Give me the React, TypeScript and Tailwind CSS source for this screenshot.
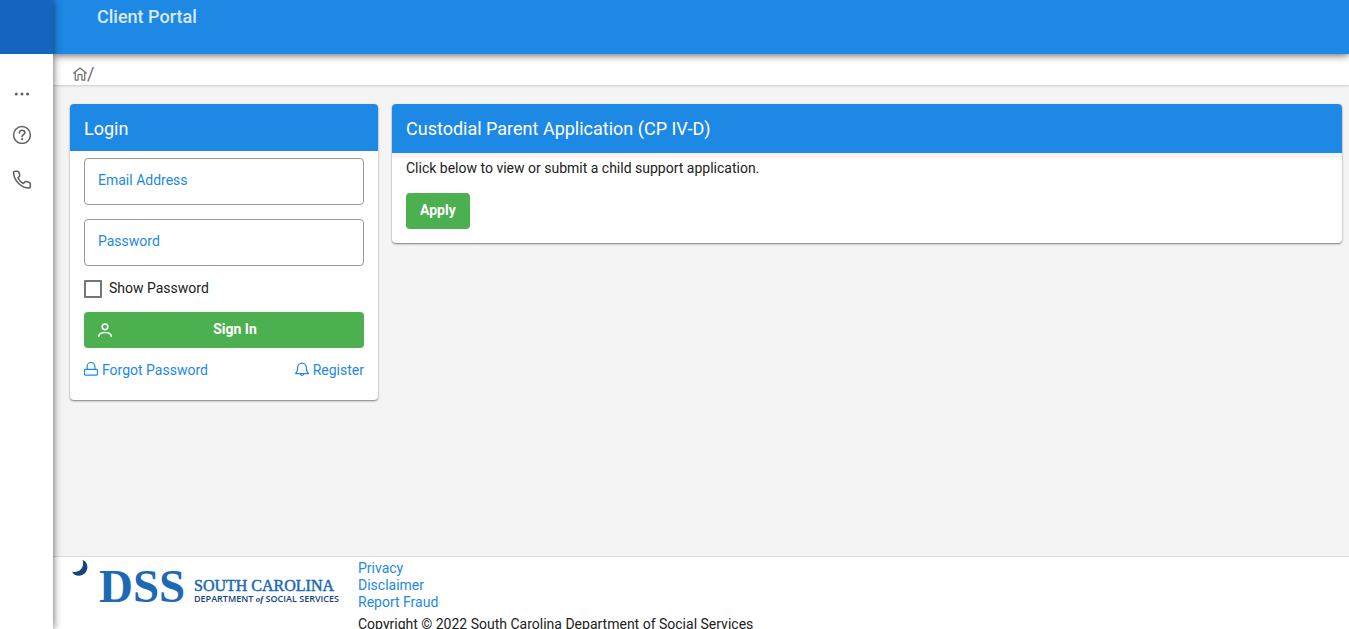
import { useState } from "react";
import type { ReactNode } from "react";

const Icon = ({
  className,
  children,
}: {
  className: string;
  children: ReactNode;
}) => (
  <svg
    className={className}
    fill="none"
    stroke="currentColor"
    strokeLinecap="round"
    strokeLinejoin="round"
    viewBox="0 0 20 20"
    aria-hidden="true"
  >
    {children}
  </svg>
);

const Sidebar = () => (
  <aside className="relative z-20 flex w-[53px] shrink-0 flex-col bg-white shadow-[0_0_8px_rgba(0,0,0,0.65)]">
    <div className="h-[54px] bg-[#1565c0]" />
    <nav className="flex flex-col pl-3 pt-[30px] text-[#616161]">
      <button type="button" aria-label="More" className="h-5 w-5">
        <Icon className="h-5 w-5">
          <g fill="currentColor" stroke="none">
            <circle cx="4.3" cy="10" r="1.5" />
            <circle cx="10" cy="10" r="1.5" />
            <circle cx="15.6" cy="10" r="1.5" />
          </g>
        </Icon>
      </button>
      <a href="#help" aria-label="Help" className="mt-5 h-5 w-5">
        <Icon className="h-5 w-5">
          <circle cx="10" cy="11" r="8.400" strokeWidth="1.500" />
          <path
            strokeWidth="1.6"
            d="M7.3 9c0-1.600 1.200-2.700 2.800-2.700s2.700 1 2.700 2.400c0 2-2.700 2-2.700 3.900"
          />
          <circle cx="10.1" cy="15.2" r="1.100" fill="currentColor" stroke="none" />
        </Icon>
      </a>
      <a href="#contact" aria-label="Contact" className="mt-[25px] h-5 w-5">
        <Icon className="h-5 w-5">
          <path
            strokeWidth="1.6"
            d="M2.500 2.300 5.500 2.200c.7 0 1.200.4 1.400 1l.8 2.800c.2.600 0 1.100-.4 1.500L5.900 9c1.200 2.400 3.100 4.300 5.500 5.500l1.400-1.500c.4-.4 1-.6 1.500-.4l2.900.8c.7.2 1.100.7 1.100 1.400v3.200c0 .6-.4 1-1 1C9.100 19 1.600 11.500 1.600 3.200c0-.6.3-.9.9-.9Z"
          />
        </Icon>
      </a>
    </nav>
  </aside>
);

const DssLogo = () => (
  <svg
    className="h-16 w-[280px] shrink-0"
    viewBox="0 0 280 64"
    role="img"
    aria-label="South Carolina Department of Social Services"
  >
    <path
      fill="#164280"
      d="M10.500 0c3 1 5 3.900 4.900 7.200-.1 4.800-3.900 8.500-8.400 8.500-3.200 0-6-1.700-7-4.300 1.500.7 3.900.8 6.300-.3C9.900 9.500 12.300 5.200 10.500 0Z"
    />
    <g fill="#1c69b5" fontFamily="'Liberation Serif', serif">
      <text x="27" y="42" fontSize="47" fontWeight="700">
        DSS
      </text>
      <text x="122" y="31" fontSize="16" stroke="#1c69b5" strokeWidth="0.5">
        SOUTH CAROLINA
      </text>
    </g>
    <text
      x="122"
      y="42"
      fill="#164280"
      fontSize="9"
      fontWeight="600"
      fontFamily="'Open Sans', sans-serif"
    >
      DEPARTMENT{" "}
      <tspan fontFamily="'Liberation Serif', serif" fontStyle="italic">
        of
      </tspan>{" "}
      SOCIAL SERVICES
    </text>
  </svg>
);

const LoginCard = () => {
  const [showPassword, setShowPassword] = useState(false);
  const fieldClass =
    "block h-[47px] w-full rounded border border-[#999] bg-white px-[13px] pb-1 text-sm text-[#212121] placeholder:text-[#1e88e5] focus:outline-none focus:border-[#1e88e5]";

  return (
    <section className="w-[308px] shrink-0 overflow-hidden rounded bg-white shadow-[0_1px_2px_rgba(0,0,0,0.5)]">
      <h2 className="bg-[#1e88e5] px-3.5 pb-2 pt-[11px] text-lg font-normal leading-7 text-white">
        Login
      </h2>
      <form
        className="px-3.5 pb-5 pt-[7px]"
        onSubmit={(e) => e.preventDefault()}
      >
        <input
          type="email"
          aria-label="Email Address"
          placeholder="Email Address"
          className={fieldClass}
        />
        <input
          type={showPassword ? "text" : "password"}
          aria-label="Password"
          placeholder="Password"
          className={`mt-3.5 ${fieldClass}`}
        />
        <label className="mt-3 flex items-start gap-[7px] text-sm text-[#212121]">
          <input
            type="checkbox"
            checked={showPassword}
            onChange={(e) => setShowPassword(e.target.checked)}
            className="mt-0.5 h-[18px] w-[18px] appearance-none rounded-[1px] border-2 border-[#757575] bg-white checked:border-[#1e88e5] checked:bg-[#1e88e5]"
          />
          Show Password
        </label>
        <button
          type="submit"
          className="mt-3.5 flex h-9 w-full items-center rounded bg-[#4caf50] px-3.5 text-sm font-bold text-white"
        >
          <Icon className="h-3.5 w-3.5">
            <circle cx="10" cy="5.500" r="4" strokeWidth="2.200" />
            <path strokeWidth="2.200" d="M1 19c.5-3.500 4-5.500 9-5.500s8.500 2 9 5.500" />
          </Icon>
          <span className="flex-1 pb-0.5 pl-2">Sign In</span>
        </button>
        <div className="mt-3 flex justify-between text-sm text-[#1e88e5]">
          <a href="#forgot" className="flex items-start gap-1">
            <Icon className="mt-0.5 h-3.5 w-3.5">
              <path
                strokeWidth="1.7"
                d="M2.500 10.500h15c1 0 1.700.7 1.700 1.700v4.800c0 1-.7 1.800-1.700 1.800h-15c-1 0-1.800-.8-1.800-1.800v-4.800c0-1 .8-1.700 1.800-1.700ZM4.500 10.500V6.200a5.500 5.500 0 0 1 11 0v4.300"
              />
            </Icon>
            Forgot Password
          </a>
          <a href="#register" className="flex items-start gap-1">
            <Icon className="mt-0.5 h-3.5 w-3.5">
              <path
                strokeWidth="1.7"
                d="M.8 16.500c2.700-2 3-4 3-8.500a6.200 6.500 0 0 1 12.400 0c0 4.500.3 6.500 3 8.500H.8ZM7.800 17.700a2.300 2 0 0 0 4.400 0"
              />
            </Icon>
            Register
          </a>
        </div>
      </form>
    </section>
  );
};

const ApplicationCard = () => (
  <section className="min-w-0 flex-1 overflow-hidden rounded bg-white shadow-[0_1px_2px_rgba(0,0,0,0.5)]">
    <h2 className="bg-[#1e88e5] px-3.5 pb-2.5 pt-[11px] text-lg font-normal leading-7 text-white">
      Custodial Parent Application (CP IV-D)
    </h2>
    <div className="border-t-[5px] border-[#f4f4f4] px-3.5 pb-3.5">
      <p className="text-sm text-[#212121]">
        Click below to view or submit a child support application.
      </p>
      <button
        type="button"
        className="mt-[15px] h-9 rounded bg-[#4caf50] px-3.5 pb-0.5 text-sm font-bold text-white"
      >
        Apply
      </button>
    </div>
  </section>
);

const Footer = () => (
  <footer className="flex h-[73px] shrink-0 overflow-hidden border-t border-[#d8d8d8] bg-white pl-[19px] pt-[3px] text-sm">
    <DssLogo />
    <div className="pl-[6px] leading-[17px] text-[#212121]">
      <ul className="text-[#1e88e5]">
        <li>
          <a href="#privacy">Privacy</a>
        </li>
        <li>
          <a href="#disclaimer">Disclaimer</a>
        </li>
        <li>
          <a href="#fraud">Report Fraud</a>
        </li>
      </ul>
      <p className="mt-[5px]">
        Copyright © 2022 South Carolina Department of Social Services
      </p>
    </div>
  </footer>
);

const App = () => (
  <div className="flex h-screen overflow-hidden bg-[#f4f4f4] font-[Roboto,sans-serif]">
    <Sidebar />
    <div className="flex min-w-0 flex-1 flex-col">
      <header className="relative z-10 h-[54px] shrink-0 bg-[#1e88e5] pl-11 pt-[3px] shadow-[0_1px_8px_rgba(0,0,0,0.65)]">
        <h1 className="text-lg font-medium leading-7 text-[#d7eafb]">
          Client Portal
        </h1>
      </header>
      <nav
        aria-label="Breadcrumb"
        className="flex h-[31px] shrink-0 items-center bg-white pl-5 pt-2 text-[#6b6b6b] shadow-[0_0_3px_rgba(0,0,0,0.3)]"
      >
        <a href="#home" aria-label="Home">
          <Icon className="h-3.5 w-3.5">
            <path
              strokeWidth="1.700"
              d="M.8 8.800 10 1.500l9.200 7.300M3.200 7.500v11.200h4v-6.500c0-.7.500-1.200 1.200-1.200h3.200c.7 0 1.200.5 1.200 1.200v6.500h4V7.500"
            />
          </Icon>
        </a>
        <span className="text-lg">/</span>
      </nav>
      <main className="flex flex-1 items-start gap-3.5 overflow-auto pb-4 pl-[17px] pr-[7px] pt-[19px]">
        <LoginCard />
        <ApplicationCard />
      </main>
      <Footer />
    </div>
  </div>
);

export default App;
